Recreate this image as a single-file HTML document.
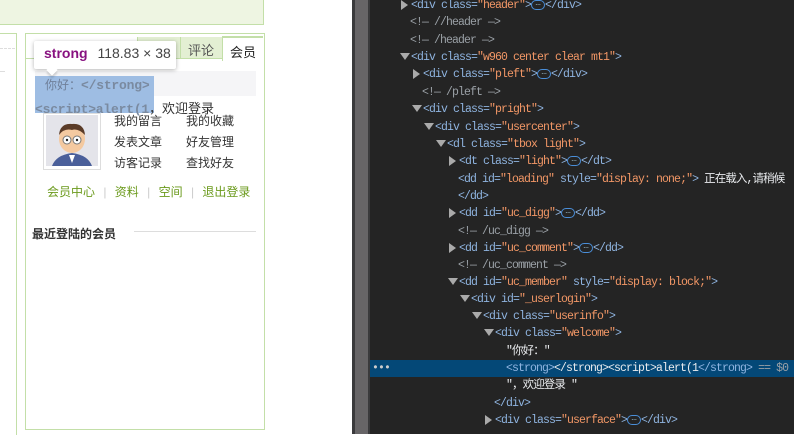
<!DOCTYPE html>
<html><head><meta charset="utf-8"><style>
body{margin:0;width:794px;height:434px;overflow:hidden;background:#fff;position:relative;font-family:"Liberation Sans","Noto Sans CJK SC",sans-serif}
.a{position:absolute}
.dt{position:absolute;left:370px;top:0;width:424px;height:434px;background:#242424;font-family:"Liberation Mono","Noto Sans CJK SC",monospace;font-size:11.5px;letter-spacing:-0.9px;color:#e8eaed}
.l{position:absolute;height:17px;line-height:17px;white-space:nowrap}
.t{color:#8fb4e0}.v{color:#f29766}.c{color:#9aa0a6}
.r,.d{display:inline-block;width:0;height:0;margin-right:3px;vertical-align:middle}
.r{border-left:7px solid #aaa;border-top:5px solid transparent;border-bottom:5px solid transparent}
.d{border-top:7px solid #aaa;border-left:5px solid transparent;border-right:5px solid transparent;margin-right:1px}
.b{display:inline-block;border:1px solid #4a8ed8;border-radius:6px;width:12px;height:8px;line-height:5px;font-size:9px;text-align:center;color:#9bc;vertical-align:middle;letter-spacing:0}
.lk{font-size:12px;color:#333}
.g{font-size:12px;color:#6b9a1c}
</style></head><body>
<div class="a" style="left:0;top:0;width:263px;height:24px;background:#eef5e2;border-right:1px solid #c3dfa8;border-bottom:1px solid #c3dfa8"></div>
<div class="a" style="left:0;top:33px;width:16px;height:401px;border-right:1px solid #c3dfa8;border-top:1px solid #c3dfa8"></div>
<div class="a" style="left:0;top:48px;width:15px;border-top:1px dashed #ddd"></div>
<div class="a" style="left:0;top:71px;width:5px;border-top:1px solid #ddd"></div>
<div class="a" style="left:25px;top:33px;width:238px;height:395px;border:1px solid #c3dfa8"></div>
<div class="a" style="left:26px;top:58px;width:237px;border-top:1px solid #c3dfa8"></div>
<div class="a" style="left:137px;top:37px;width:84px;height:21px;background:#e3efd3;border-left:1px solid #c3dfa8"></div>
<div class="a" style="left:180px;top:37px;width:1px;height:21px;background:#c3dfa8"></div>
<div class="a" style="left:188px;top:40px;font-size:13px;color:#555">评论</div>
<div class="a" style="left:222px;top:36px;width:40px;height:23px;background:#fff;border-top:2px solid #c3dfa8;border-left:1px solid #c3dfa8"></div>
<div class="a" style="left:230px;top:42px;font-size:13px;color:#222">会员</div>
<div class="a" style="left:35px;top:71px;width:221px;height:25px;background:#f5f5f7"></div>
<div class="a" style="left:35px;top:76px;width:119px;height:37px;background:#9ebde3"></div>
<div class="a" style="left:45px;top:76px;font-size:12px;color:#6f7f99;white-space:nowrap">你好：<b style="color:#7a8aa0;font-family:'Liberation Mono',monospace;font-size:13px;letter-spacing:-0.2px">&lt;/strong&gt;</b></div>
<div class="a" style="left:35px;top:98px;color:#7a8aa0;white-space:nowrap"><b style="font-family:'Liberation Mono',monospace;font-size:13px;letter-spacing:-0.2px">&lt;script&gt;alert(1</b><span style="font-size:13px;color:#333">，欢迎登录</span></div>
<div class="a" style="left:34px;top:41px;width:142px;height:28px;background:#fff;box-shadow:0 1px 4px rgba(0,0,0,.3);border-radius:2px"></div>
<div class="a" style="left:48px;top:66px;width:8px;height:8px;background:#fff;transform:rotate(45deg);box-shadow:2px 2px 2px rgba(0,0,0,.15)"></div>
<div class="a" style="left:44px;top:45px;font-size:14px;white-space:nowrap"><b style="color:#881280">strong</b> <span style="color:#444;margin-left:6px">118.83 × 38</span></div>
<div class="a" style="left:43px;top:113px;width:56px;height:55px;border:1px solid #ddd;background:#fff"></div>
<div class="a" style="left:46px;top:115px;width:52px;height:51px;background:#e4e4ea;overflow:hidden">
<svg width="52" height="51"><path d="M6 51 Q10 40 26 38 Q42 40 46 51Z" fill="#4a5f9a"/><path d="M23 40 L26 48 L29 40Z" fill="#fff"/><ellipse cx="26" cy="24" rx="13" ry="14" fill="#f4c9a0"/><path d="M13 20 Q14 8 26 9 Q38 8 39 20 Q32 13 26 15 Q18 13 13 20Z" fill="#5a3b28"/><circle cx="21" cy="25" r="4" fill="#fff" stroke="#777"/><circle cx="31" cy="25" r="4" fill="#fff" stroke="#777"/><circle cx="21" cy="25" r="1.2" fill="#222"/><circle cx="31" cy="25" r="1.2" fill="#222"/></svg></div>
<div class="a lk" style="left:114px;top:112px">我的留言</div><div class="a lk" style="left:186px;top:112px">我的收藏</div>
<div class="a lk" style="left:114px;top:133px">发表文章</div><div class="a lk" style="left:186px;top:133px">好友管理</div>
<div class="a lk" style="left:114px;top:154px">访客记录</div><div class="a lk" style="left:186px;top:154px">查找好友</div>
<div class="a g" style="left:47px;top:183px;white-space:nowrap">会员中心 <span style="color:#ccc;margin:0 5px">|</span> 资料 <span style="color:#ccc;margin:0 5px">|</span> 空间 <span style="color:#ccc;margin:0 5px">|</span> 退出登录</div>
<div class="a" style="left:32px;top:225px;font-size:12px;font-weight:bold;color:#333">最近登陆的会员</div>
<div class="a" style="left:134px;top:231px;width:122px;border-top:1px solid #ddd"></div>
<div class="a" style="left:352px;top:0;width:18px;height:434px;background:#3a3a3c"></div>
<div class="a" style="left:355px;top:0;width:13px;height:434px;background:#676567"></div>
<div class="dt">
<div class="a" style="left:0;top:360px;width:424px;height:17px;background:#044877"></div>
<div class="l" style="left:2px;top:360px;color:#ccc">•••</div>
<div class="l" style="left:31px;top:-3px"><span class="r"></span><span class="t">&lt;div class=</span><span class="v">"header"</span><span class="t">&gt;</span><span class="b">…</span><span class="t">&lt;/div&gt;</span></div>
<div class="l" style="left:40px;top:14px"><span class="c">&lt;!— //header —&gt;</span></div>
<div class="l" style="left:40px;top:32px"><span class="c">&lt;!— /header —&gt;</span></div>
<div class="l" style="left:30px;top:49px"><span class="d"></span><span class="t">&lt;div class=</span><span class="v">"w960 center clear mt1"</span><span class="t">&gt;</span></div>
<div class="l" style="left:43px;top:66px"><span class="r"></span><span class="t">&lt;div class=</span><span class="v">"pleft"</span><span class="t">&gt;</span><span class="b">…</span><span class="t">&lt;/div&gt;</span></div>
<div class="l" style="left:52px;top:84px"><span class="c">&lt;!— /pleft —&gt;</span></div>
<div class="l" style="left:42px;top:101px"><span class="d"></span><span class="t">&lt;div class=</span><span class="v">"pright"</span><span class="t">&gt;</span></div>
<div class="l" style="left:54px;top:119px"><span class="d"></span><span class="t">&lt;div class=</span><span class="v">"usercenter"</span><span class="t">&gt;</span></div>
<div class="l" style="left:66px;top:136px"><span class="d"></span><span class="t">&lt;dl class=</span><span class="v">"tbox light"</span><span class="t">&gt;</span></div>
<div class="l" style="left:79px;top:153px"><span class="r"></span><span class="t">&lt;dt class=</span><span class="v">"light"</span><span class="t">&gt;</span><span class="b">…</span><span class="t">&lt;/dt&gt;</span></div>
<div class="l" style="left:88px;top:171px"><span class="t">&lt;dd id=</span><span class="v">"loading"</span><span class="t"> style=</span><span class="v">"display: none;"</span><span class="t">&gt;</span> 正在载入,请稍候</div>
<div class="l" style="left:88px;top:188px"><span class="t">&lt;/dd&gt;</span></div>
<div class="l" style="left:79px;top:205px"><span class="r"></span><span class="t">&lt;dd id=</span><span class="v">"uc_digg"</span><span class="t">&gt;</span><span class="b">…</span><span class="t">&lt;/dd&gt;</span></div>
<div class="l" style="left:88px;top:223px"><span class="c">&lt;!— /uc_digg —&gt;</span></div>
<div class="l" style="left:79px;top:240px"><span class="r"></span><span class="t">&lt;dd id=</span><span class="v">"uc_comment"</span><span class="t">&gt;</span><span class="b">…</span><span class="t">&lt;/dd&gt;</span></div>
<div class="l" style="left:88px;top:257px"><span class="c">&lt;!— /uc_comment —&gt;</span></div>
<div class="l" style="left:78px;top:274px"><span class="d"></span><span class="t">&lt;dd id=</span><span class="v">"uc_member"</span><span class="t"> style=</span><span class="v">"display: block;"</span><span class="t">&gt;</span></div>
<div class="l" style="left:90px;top:291px"><span class="d"></span><span class="t">&lt;div id=</span><span class="v">"_userlogin"</span><span class="t">&gt;</span></div>
<div class="l" style="left:102px;top:308px"><span class="d"></span><span class="t">&lt;div class=</span><span class="v">"userinfo"</span><span class="t">&gt;</span></div>
<div class="l" style="left:114px;top:325px"><span class="d"></span><span class="t">&lt;div class=</span><span class="v">"welcome"</span><span class="t">&gt;</span></div>
<div class="l" style="left:136px;top:343px">"你好："</div>
<div class="l" style="left:136px;top:360px"><span class="t">&lt;strong&gt;</span>&lt;/strong&gt;&lt;script&gt;alert(1<span class="t">&lt;/strong&gt;</span><span class="c"> == $0</span></div>
<div class="l" style="left:136px;top:377px">"，欢迎登录 "</div>
<div class="l" style="left:124px;top:395px"><span class="t">&lt;/div&gt;</span></div>
<div class="l" style="left:115px;top:412px"><span class="r"></span><span class="t">&lt;div class=</span><span class="v">"userface"</span><span class="t">&gt;</span><span class="b">…</span><span class="t">&lt;/div&gt;</span></div>
</div>
</body></html>
